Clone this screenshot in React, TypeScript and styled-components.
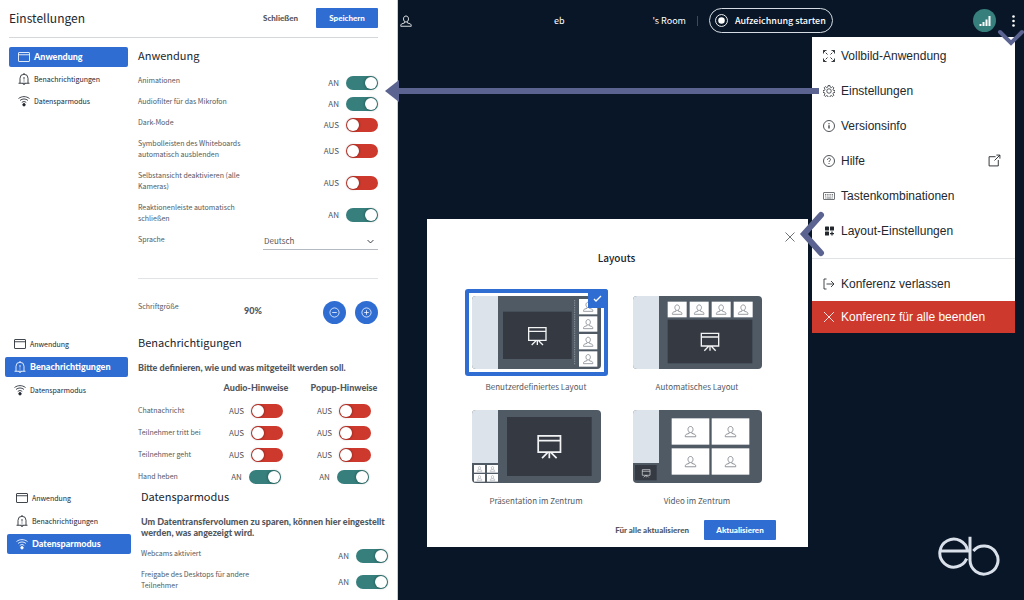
import React, { useState } from "react";
import styled, { createGlobalStyle, css } from "styled-components";

const sans = `"Noto Sans CJK JP", "Noto Sans", sans-serif`;
const strong = `Lato, "Open Sans", sans-serif`;
const menuFont = `"Liberation Sans", Arial, sans-serif`;

const color = {
  night: "#081627",
  blue: "#2f6dd2",
  red: "#ce392d",
  teal: "#367f7c",
  arrow: "#5b6391",
  text: "#20262e",
  muted: "#51575e",
  line: "#d5d8db",
};

const GlobalStyle = createGlobalStyle`
  *, *::before, *::after { box-sizing: border-box; }
  body { margin: 0; background: ${color.night}; font-family: ${sans}; color: ${color.text}; }
  button, input, select { font: inherit; color: inherit; margin: 0; }
  button { border: 0; padding: 0; background: none; cursor: pointer; }
  h1, h2, p, ul { margin: 0; padding: 0; font-weight: 400; }
  ul { list-style: none; }
  svg { display: block; flex: none; }
`;

const Page = styled.div`
  position: relative;
  display: flex;
  min-height: 100vh;
`;

/* ---------- settings ---------- */

const Settings = styled.div`
  flex: 0 0 398px;
  background: #fff;
  border-right: 1px solid #c9ced6;
`;

const SettingsHeader = styled.header`
  display: flex;
  align-items: center;
  height: 38px;
  margin: 0 19px 0 9px;
  padding-bottom: 2px;
  border-bottom: 1px solid ${color.line};
`;

const HeaderButtons = styled.div`
  display: flex;
  align-items: center;
  gap: 18px;
`;

const Title = styled.h1`
  flex: 1;
  font-size: 12px;
  line-height: 18px;
`;

const TextButton = styled.button`
  font: 900 8px/12px ${strong};
  color: ${color.muted};
`;

const PrimaryButton = styled.button<{ $width: number }>`
  width: ${(p) => p.$width}px;
  height: 20px;
  border-radius: 1px;
  background: ${color.blue};
  color: #fff;
  font: 900 8px/12px ${strong};
`;

const Section = styled.section<{ $left: number; $nav: number; $right: number }>`
  display: grid;
  grid-template-columns: ${(p) => p.$nav}px 1fr;
  column-gap: 10px;
  align-items: start;
  padding: 0 ${(p) => p.$right}px 0 ${(p) => p.$left}px;
`;

const FirstSection = styled(Section)`
  padding-top: 9px;
`;

const Nav = styled.nav<{ $gap: number }>`
  display: flex;
  flex-direction: column;
  gap: ${(p) => p.$gap}px;
`;

const NavItem = styled.button<{ $active: boolean }>`
  display: flex;
  align-items: center;
  gap: 4px;
  height: 20px;
  padding: 0 9px;
  border-radius: 2px;
  text-align: left;
  font-size: 7px;
  line-height: 12px;
  ${(p) =>
    p.$active &&
    css`
      background: ${color.blue};
      color: #fff;
      font-family: ${strong};
      font-weight: 900;
      font-size: 9px;
    `}
`;

const Heading = styled.h2`
  font-size: 11px;
  line-height: 16px;
`;

const Lead = styled.p`
  margin-top: 12px;
  font: 900 9px/11px ${strong};
  color: ${color.muted};
`;

const Rows = styled.div<{ $top: number }>`
  margin-top: ${(p) => p.$top}px;
`;

const Row = styled.div`
  display: flex;
  justify-content: space-between;
  align-items: center;
`;

const RowLabel = styled.label`
  flex: 0 0 50%;
  align-self: flex-start;
  padding: 3px 0 7px;
  font-size: 7px;
  line-height: 11px;
  color: ${color.muted};
`;

const ToggleBox = styled.span`
  display: flex;
  align-items: center;
  justify-content: center;
  gap: 7px;
  font-size: 8px;
  line-height: 14px;
  color: ${color.muted};
`;

const Switch = styled.input`
  appearance: none;
  display: flex;
  align-items: center;
  width: 32px;
  height: 14px;
  padding: 1px;
  border-radius: 7px;
  background: ${color.red};
  cursor: pointer;
  &::before {
    content: "";
    width: 12px;
    height: 12px;
    border-radius: 50%;
    background: #fff;
    box-shadow: 0 0 3px rgba(0, 0, 0, 0.45);
  }
  &:checked {
    justify-content: flex-end;
    background: ${color.teal};
  }
`;

const SelectBox = styled.span`
  display: flex;
  align-items: center;
  width: 115px;
  height: 17px;
  padding-right: 4px;
  border-bottom: 1px solid #b5bac0;
`;

const Select = styled.select`
  appearance: none;
  flex: 1;
  border: 0;
  padding: 0 0 0 1px;
  background: none;
  font-size: 8px;
  line-height: 14px;
  color: ${color.muted};
`;

const Rule = styled.hr`
  margin: 26px 0 22px;
  border: 0;
  border-top: 1px solid #e1e4e6;
`;

const FontRow = styled.div`
  display: flex;
  align-items: flex-start;
  height: 33px;
  font-size: 7px;
  line-height: 11px;
  color: ${color.muted};
`;

const FontLabel = styled.span`
  flex: 0 0 106px;
`;

const FontValue = styled.output`
  flex: 1;
  font: 900 9px/19px ${strong};
`;

const RoundButtons = styled.div`
  display: flex;
  gap: 9px;
`;

const RoundButton = styled.button`
  display: grid;
  place-items: center;
  width: 23px;
  height: 23px;
  border-radius: 50%;
  background: ${color.blue};
  color: #fff;
`;

const Table = styled.table`
  width: 100%;
  margin-top: 2px;
  table-layout: fixed;
  border-collapse: collapse;
  text-align: center;
  th, td { padding: 0; }
  thead tr { height: 25px; }
  thead th { font: 900 9px/12px ${strong}; color: ${color.muted}; }
  thead td { width: 74px; }
  tbody tr { height: 22px; }
  tbody th {
    padding-bottom: 3px;
    text-align: left;
    font-weight: 400;
    font-size: 7px;
    line-height: 12px;
    white-space: nowrap;
    color: ${color.muted};
  }
`;

/* ---------- conference ---------- */

const Stage = styled.main`
  flex: 1;
  display: flex;
  flex-direction: column;
  min-width: 0;
  color: #fff;
`;

const TopBar = styled.header`
  display: flex;
  align-items: center;
  height: 37px;
  padding: 4px 8px 0 2px;
  font-size: 9px;
  line-height: 14px;
`;

const Room = styled.div`
  display: flex;
  align-items: center;
  gap: 11px;
  margin: 0 auto 0 142px;
`;

const RoomName = styled.span`
  display: flex;
  gap: 88px;
`;

const Separator = styled.span`
  width: 1px;
  height: 10px;
  background: #3d4a5a;
`;

const RecordButton = styled.button`
  display: flex;
  align-items: center;
  gap: 7px;
  height: 25px;
  padding: 0 6px 0 5px;
  border: 1px solid #d5dbe2;
  border-radius: 13px;
  font-weight: 500;
  white-space: nowrap;
`;

const BarActions = styled.div`
  display: flex;
  align-items: center;
  gap: 15px;
`;

const SignalButton = styled.button`
  display: grid;
  place-items: center;
  width: 23px;
  height: 23px;
  border-radius: 50%;
  background: ${color.teal};
  color: #fff;
`;

const StageBody = styled.div`
  flex: 1;
  display: grid;
  grid-template-columns: 1fr 203px;
  column-gap: 4px;
  padding: 0 9px 24px 29px;
`;

const Side = styled.aside`
  display: flex;
  flex-direction: column;
  justify-content: space-between;
`;

const Menu = styled.ul`
  background: #fff;
  color: #23282e;
`;

const MenuGroup = styled.li<{ $divided?: boolean }>`
  padding: ${(p) => (p.$divided ? "7px 0 0" : "1px 0 10px")};
  ${(p) => p.$divided && css`border-top: 1px solid #dfe3e6;`}
`;

const MenuItem = styled.button<{ $danger?: boolean }>`
  display: flex;
  align-items: center;
  gap: 6px;
  width: 100%;
  height: ${(p) => (p.$danger ? 32 : 35)}px;
  padding: 0 14px 0 11px;
  font: 12px/16px ${menuFont};
  text-align: left;
  ${(p) => p.$danger && css`background: ${color.red}; color: #fff;`}
`;

const MenuText = styled.span`
  flex: 1;
`;

const Dialog = styled.section`
  align-self: start;
  margin-top: 182px;
  padding: 12px 12px 7px 10px;
  background: #fff;
  color: ${color.text};
`;

const DialogClose = styled.button`
  display: block;
  margin-left: auto;
  color: #555b62;
`;

const DialogTitle = styled.h2`
  margin-top: 7px;
  text-align: center;
  font-size: 10px;
  font-weight: 500;
  line-height: 16px;
`;

const Layouts = styled.div`
  display: grid;
  grid-template-columns: 143px 143px;
  justify-content: center;
  gap: 10px 18px;
  margin-top: 23px;
`;

const LayoutCard = styled.label`
  text-align: center;
  font-size: 8px;
  line-height: 12px;
  color: ${color.muted};
  cursor: pointer;
`;

const Frame = styled.span<{ $on: boolean }>`
  position: relative;
  display: block;
  margin-bottom: 5px;
  padding: 3px;
  border: 4px solid ${(p) => (p.$on ? color.blue : "transparent")};
  border-radius: 3px;
`;

const Radio = styled.input`
  position: absolute;
  inset: 0;
  opacity: 0;
`;

const Tick = styled.span`
  position: absolute;
  top: -4px;
  right: -4px;
  display: grid;
  place-items: center;
  width: 20px;
  height: 19px;
  border-radius: 0 3px 0 0;
  background: ${color.blue};
`;

const DialogFooter = styled.footer`
  display: flex;
  justify-content: flex-end;
  align-items: center;
  gap: 15px;
  margin: 13px 20px 0 0;
`;

const Logo = styled.svg`
  align-self: flex-end;
  margin-right: 15px;
`;

/* annotation arrows that lie over the interface */

const LongArrow = styled.div`
  position: absolute;
  top: 80px;
  left: 385px;
  right: 205px;
  display: flex;
  align-items: center;
  pointer-events: none;
  &::after {
    content: "";
    flex: 1;
    height: 6px;
    background: ${color.arrow};
  }
`;

const Pointer = styled.svg<{ $top: number; $right: number }>`
  position: absolute;
  top: ${(p) => p.$top}px;
  right: ${(p) => p.$right}px;
  pointer-events: none;
`;

/* ---------- icons ---------- */

type IconProps = { children: React.ReactNode; w?: number; h?: number; box?: string; sw?: number };
const Icon = ({ children, w = 12, h = 12, box = "0 0 24 24", sw = 1.7 }: IconProps) => (
  <svg width={w} height={h} viewBox={box} fill="none" stroke="currentColor" strokeWidth={sw} aria-hidden="true">
    {children}
  </svg>
);

const WindowIcon = () => (
  <Icon><rect x="1" y="3" width="22" height="18" rx="1" /><path d="M1 7.500h22" /></Icon>
);
const BellIcon = () => (
  <Icon>
    <path d="M1 20.500h22M4 20.500v-10a8 8 0 0 1 16 0v10M9.500 21a2.600 2.600 0 0 0 5 0M12 2.500V0M12 8v5M12 15v2" />
  </Icon>
);
const WifiIcon = () => (
  <Icon>
    <path d="M1 7c7-5 15-5 22 0M4 11c5-4 11-4 16 0M7.500 15c3-2.500 6-2.500 9 0" />
    <circle cx="12" cy="19.500" r="2.500" fill="currentColor" />
  </Icon>
);
const CloseIcon = () => (
  <Icon><path d="M2 2l20 20M22 2L2 22" /></Icon>
);
const PersonShape = () => (
  <path d="M12 2c-3.200 0-5 2.500-5 5.800S9 14 12 14s5-2.900 5-6.200S15.200 2 12 2zM9.300 13.500v2.300l-5.300 1.700c-1.800.7-2.500 2-2.500 5h21c0-3-.7-4.300-2.500-5l-5.300-1.700v-2.300" />
);

const menuIcons = {
  full: (
    <Icon sw={1.8}>
      <path d="M1 7V1h6M17 1h6v6M1 17v6h6M23 17v6h-6" />
      <path d="M1 1l8 8M23 1l-8 8M1 23l8-8M23 23l-8-8" strokeDasharray="5 2 5" />
    </Icon>
  ),
  gear: (
    <Icon sw={1.5}>
      <circle cx="12" cy="12" r="4.500" />
      <path d="M10.200 1h3.600l.6 3.200 2.300 1 2.700-1.900 2.500 2.500-1.900 2.700 1 2.300 3 .5v3.500l-3.100.6-1 2.300 1.900 2.700-2.500 2.500-2.700-1.900-2.300 1-.6 3h-3.500l-.6-3-2.300-1-2.700 1.900-2.500-2.500 1.900-2.700-1-2.300-3-.6v-3.500l3.100-.6 1-2.300-1.900-2.700 2.500-2.500 2.700 1.900 2.300-1z" strokeLinejoin="round" />
    </Icon>
  ),
  info: (
    <Icon sw={1.6}><circle cx="12" cy="12" r="11" /><path d="M12 10.500V17M12 6.500v2" strokeWidth="2.400" /></Icon>
  ),
  help: (
    <Icon sw={1.6}>
      <circle cx="12" cy="12" r="11" />
      <path d="M9 9.500c0-4 6-4 6-.5 0 2.500-3 2.500-3 5M12 16v2" />
    </Icon>
  ),
  keys: (
    <Icon sw={1.3}>
      <rect x="1" y="5" width="22" height="14" rx="1" />
      <path d="M4 9h16M4 12h16" strokeDasharray="2 1.500" /><path d="M7 16h10M4 16h1.500M18.500 16H20" />
    </Icon>
  ),
  layout: (
    <Icon sw={2.5}>
      <g fill="currentColor" stroke="none">
        <rect x="4" y="3" width="8" height="8" rx="1" /><rect x="14" y="3" width="8" height="8" rx="1" />
        <rect x="4" y="13" width="8" height="8" rx="1" />
      </g>
      <path d="M18 13v8M14 17h8" />
    </Icon>
  ),
  leave: (
    <Icon sw={1.7}><path d="M7 2H2v20h5M7 12h15M16 6l6 6-6 6" /></Icon>
  ),
  end: <CloseIcon />,
};

const ExternalIcon = () => (
  <Icon w={13} h={13} sw={1.7}><path d="M14 5H2v17h17V11M12 12L22 2M15.500 2H22v6.500" /></Icon>
);

/* ---------- layout thumbnails ---------- */

const Person = ({ x, y, s }: { x: number; y: number; s: number }) => (
  <g transform={`translate(${x - s / 2} ${y - s / 2}) scale(${s / 24})`} fill="none" stroke="#83888e" strokeWidth="1.800">
    <PersonShape />
  </g>
);

const Cell = ({ x, y, w, h, s }: { x: number; y: number; w: number; h: number; s: number }) => (
  <g><rect x={x} y={y} width={w} height={h} fill="#fff" /><Person x={x + w / 2} y={y + h / 2} s={s} /></g>
);

const Board = ({ x, y, s }: { x: number; y: number; s: number }) => (
  <path
    transform={`translate(${x} ${y}) scale(${s / 56})`}
    d="M2 2h52v38H2zM2 13h52M28 40v14M24 41L11 54M32 41l13 13"
    fill="none" stroke="#f2f3f4" strokeWidth="4"
  />
);

const Thumb = ({ children, short }: { children: React.ReactNode; short?: boolean }) => (
  <svg width="129" height="73" viewBox="0 0 387 219" aria-hidden="true">
    <rect width="387" height="219" rx="12" fill="#4f5a65" />
    <path d={short ? "M12 0H78V159H0V12Q0 0 12 0" : "M12 0H78V219H12Q0 219 0 207V12Q0 0 12 0"} fill="#dce3ea" />
    {children}
  </svg>
);

const thumbs = {
  custom: (
    <Thumb>
      <rect x="93" y="47" width="206" height="142" fill="#353942" />
      <Board x={168} y={93} s={56} />
      <path d="M308 12v196" stroke="#8b939c" strokeWidth="3" strokeDasharray="4 3" />
      {[9, 61, 114, 166].map((y) => <Cell key={y} x={321} y={y} w={55} h={46} s={32} />)}
    </Thumb>
  ),
  auto: (
    <Thumb>
      {[104, 170, 236, 302].map((x) => <Cell key={x} x={x} y={17} w={57} h={47} s={33} />)}
      <rect x="104" y="71" width="254" height="131" fill="#353942" />
      <Board x={203} y={110} s={56} />
    </Thumb>
  ),
  presentation: (
    <Thumb short>
      <rect x="105" y="21" width="254" height="177" fill="#353942" />
      <Board x={196} y={75} s={72} />
      {[165, 192].map((y) => [6, 45].map((x) => <Cell key={`${x}-${y}`} x={x} y={y} w={33} h={23} s={17} />))}
    </Thumb>
  ),
  video: (
    <Thumb short>
      <rect x="6" y="165" width="65" height="46" fill="#353942" />
      <Board x={27} y={178} s={25} />
      {[25, 115].map((y) => [116, 236].map((x) => <Cell key={`${x}-${y}`} x={x} y={y} w={113} h={79} s={36} />))}
    </Thumb>
  ),
};

/* ---------- parts ---------- */

const navItems = [
  { name: "Anwendung", icon: <WindowIcon /> },
  { name: "Benachrichtigungen", icon: <BellIcon /> },
  { name: "Datensparmodus", icon: <WifiIcon /> },
];

const SectionNav = ({ active, gap }: { active: string; gap: number }) => (
  <Nav $gap={gap} aria-label={active}>
    {navItems.map((item) => (
      <NavItem key={item.name} $active={item.name === active}>
        {item.icon}
        {item.name}
      </NavItem>
    ))}
  </Nav>
);

const Toggle = ({ id, initial, label }: { id?: string; initial: boolean; label?: string }) => {
  const [on, setOn] = useState(initial);
  return (
    <ToggleBox>
      {on ? "AN" : "AUS"}
      <Switch type="checkbox" role="switch" id={id} aria-label={label} checked={on} onChange={() => setOn(!on)} />
    </ToggleBox>
  );
};

const ToggleRow = ({ id, text, on }: { id: string; text: string; on: boolean }) => (
  <Row>
    <RowLabel htmlFor={id}>{text}</RowLabel>
    <Toggle id={id} initial={on} />
  </Row>
);

const appToggles: [string, string, boolean][] = [
  ["animations", "Animationen", true],
  ["filter", "Audiofilter für das Mikrofon", true],
  ["dark", "Dark-Mode", false],
  ["toolbars", "Symbolleisten des Whiteboards automatisch ausblenden", false],
  ["selfview", "Selbstansicht deaktivieren (alle Kameras)", false],
  ["reactions", "Reaktionenleiste automatisch schließen", true],
];

const notices: [string, boolean][] = [
  ["Chatnachricht", false],
  ["Teilnehmer tritt bei", false],
  ["Teilnehmer geht", false],
  ["Hand heben", true],
];

const menuEntries: [keyof typeof menuIcons, string][] = [
  ["full", "Vollbild-Anwendung"],
  ["gear", "Einstellungen"],
  ["info", "Versionsinfo"],
  ["help", "Hilfe"],
  ["keys", "Tastenkombinationen"],
  ["layout", "Layout-Einstellungen"],
];

const layouts: [keyof typeof thumbs, string][] = [
  ["custom", "Benutzerdefiniertes Layout"],
  ["auto", "Automatisches Layout"],
  ["presentation", "Präsentation im Zentrum"],
  ["video", "Video im Zentrum"],
];

export default function App() {
  const [layout, setLayout] = useState<string>("custom");
  return (
    <Page>
      <GlobalStyle />
      <Settings>
        <SettingsHeader>
          <Title>Einstellungen</Title>
          <HeaderButtons>
            <TextButton>Schließen</TextButton>
            <PrimaryButton $width={62}>Speichern</PrimaryButton>
          </HeaderButtons>
        </SettingsHeader>

        <FirstSection $left={9} $nav={119} $right={19}>
          <SectionNav active="Anwendung" gap={2} />
          <div>
            <Heading>Anwendung</Heading>
            <Rows $top={9}>
              {appToggles.map(([id, text, on]) => <ToggleRow key={id} id={id} text={text} on={on} />)}
              <Row>
                <RowLabel htmlFor="language">Sprache</RowLabel>
                <SelectBox>
                  <Select id="language"><option>Deutsch</option></Select>
                  <Icon w={7} h={7} sw={3}><path d="M2 7l10 10L22 7" /></Icon>
                </SelectBox>
              </Row>
            </Rows>
            <Rule />
            <FontRow>
              <FontLabel>Schriftgröße</FontLabel>
              <FontValue>90%</FontValue>
              <RoundButtons>
                <RoundButton aria-label="Schrift verkleinern">
                  <Icon w={11} h={11}><circle cx="12" cy="12" r="10" /><path d="M7 12h10" /></Icon>
                </RoundButton>
                <RoundButton aria-label="Schrift vergrößern">
                  <Icon w={11} h={11}><circle cx="12" cy="12" r="10" /><path d="M7 12h10M12 7v10" /></Icon>
                </RoundButton>
              </RoundButtons>
            </FontRow>
          </div>
        </FirstSection>

        <Section $left={5} $nav={123} $right={9}>
          <SectionNav active="Benachrichtigungen" gap={3} />
          <div>
            <Heading>Benachrichtigungen</Heading>
            <Lead>Bitte definieren, wie und was mitgeteilt werden soll.</Lead>
            <Table>
              <thead>
                <tr><td /><th scope="col">Audio-Hinweise</th><th scope="col">Popup-Hinweise</th></tr>
              </thead>
              <tbody>
                {notices.map(([text, on]) => (
                  <tr key={text}>
                    <th scope="row">{text}</th>
                    <td><Toggle initial={on} label={`${text}: Audio`} /></td>
                    <td><Toggle initial={on} label={`${text}: Popup`} /></td>
                  </tr>
                ))}
              </tbody>
            </Table>
          </div>
        </Section>

        <Section $left={7} $nav={124} $right={9}>
          <SectionNav active="Datensparmodus" gap={3} />
          <div>
            <Heading>Datensparmodus</Heading>
            <Lead>Um Datentransfervolumen zu sparen, können hier eingestellt werden, was angezeigt wird.</Lead>
            <Rows $top={7}>
              <ToggleRow id="webcams" text="Webcams aktiviert" on />
              <ToggleRow id="desktop" text="Freigabe des Desktops für andere Teilnehmer" on />
            </Rows>
          </div>
        </Section>
      </Settings>

      <Stage>
        <TopBar>
          <Icon w={12} h={12}><PersonShape /></Icon>
          <Room>
            <RoomName><span>eb</span><span>'s Room</span></RoomName>
            <Separator />
            <RecordButton>
              <Icon w={13} h={13}><circle cx="12" cy="12" r="11" /><circle cx="12" cy="12" r="6" fill="#fff" stroke="none" /></Icon>
              Aufzeichnung starten
            </RecordButton>
          </Room>
          <BarActions>
            <SignalButton aria-label="Verbindung">
              <Icon w={12} h={12} sw={4}><path d="M3 22v-4M9 22V14M15 22V9M21 22V2" /></Icon>
            </SignalButton>
            <button aria-label="Optionen">
              <Icon w={5} h={14} box="0 0 5 14">
                <g fill="#fff" stroke="none"><circle cx="2.500" cy="2.500" r="1.300" /><circle cx="2.500" cy="7" r="1.300" /><circle cx="2.500" cy="11.500" r="1.300" /></g>
              </Icon>
            </button>
          </BarActions>
        </TopBar>

        <StageBody>
          <Dialog aria-labelledby="layouts-title">
            <DialogClose aria-label="Dialog schließen"><Icon w={12} h={12}><path d="M3 3l18 18M21 3L3 21" /></Icon></DialogClose>
            <DialogTitle id="layouts-title">Layouts</DialogTitle>
            <Layouts>
              {layouts.map(([key, text]) => (
                <LayoutCard key={key}>
                  <Frame $on={layout === key}>
                    <Radio type="radio" name="layout" checked={layout === key} onChange={() => setLayout(key)} />
                    {thumbs[key]}
                    {layout === key && (
                      <Tick><svg width="9" height="7" viewBox="0 0 9 7" fill="none" stroke="#fff" strokeWidth="1.300"><path d="M1 4l2 2 5-5" /></svg></Tick>
                    )}
                  </Frame>
                  {text}
                </LayoutCard>
              ))}
            </Layouts>
            <DialogFooter>
              <TextButton>Für alle aktualisieren</TextButton>
              <PrimaryButton $width={72}>Aktualisieren</PrimaryButton>
            </DialogFooter>
          </Dialog>

          <Side>
            <Menu>
              <MenuGroup>
                {menuEntries.map(([icon, text]) => (
                  <MenuItem key={text}>
                    {menuIcons[icon]}
                    <MenuText>{text}</MenuText>
                    {icon === "help" && <ExternalIcon />}
                  </MenuItem>
                ))}
              </MenuGroup>
              <MenuGroup $divided>
                <MenuItem>{menuIcons.leave}<MenuText>Konferenz verlassen</MenuText></MenuItem>
                <MenuItem $danger>{menuIcons.end}<MenuText>Konferenz für alle beenden</MenuText></MenuItem>
              </MenuGroup>
            </Menu>
            <Logo width="62" height="40" viewBox="54 47 186 120" fill="none" stroke="#d9e0ea" strokeWidth="9" role="img" aria-label="eb">
              <path d="M62 92H150M143 92A42 42 0 1 0 140 115" />
              <path d="M150 49V120A42 42 0 1 0 160 92" />
            </Logo>
          </Side>
        </StageBody>
      </Stage>

      <LongArrow>
        <svg width="14" height="22" viewBox="0 0 14 22"><path d="M0 11L14 0V22z" fill={color.arrow} /></svg>
      </LongArrow>
      <Pointer $top={211} $right={199} width="26" height="46" viewBox="0 0 26 46" fill="none" stroke={color.arrow} strokeWidth="6" strokeLinecap="round">
        <path d="M22 4L5 23L22 42" />
      </Pointer>
      <Pointer $top={28} $right={0} width="28" height="20" viewBox="0 0 28 20" fill="none" stroke={color.arrow} strokeWidth="4" strokeLinecap="round">
        <path d="M4 4L15 15L26 4" />
      </Pointer>
    </Page>
  );
}
